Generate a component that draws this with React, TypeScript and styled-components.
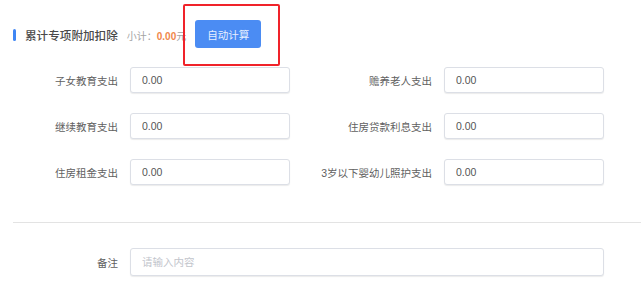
import styled, { createGlobalStyle } from 'styled-components';

type TField = {
  label: string;
  value: string;
};

const FIELDS: TField[] = [
  { label: '子女教育支出', value: '0.00' },
  { label: '赡养老人支出', value: '0.00' },
  { label: '继续教育支出', value: '0.00' },
  { label: '住房贷款利息支出', value: '0.00' },
  { label: '住房租金支出', value: '0.00' },
  { label: '3岁以下婴幼儿照护支出', value: '0.00' }
];

export default function App() {
  return (
    <Page>
      <GlobalStyle />
      <Header>
        <Marker />
        <Title>累计专项附加扣除</Title>
        <Subtotal>
          小计：<Amount>0.00</Amount>元
        </Subtotal>
        <Highlight>
          <CalcButton type="button">自动计算</CalcButton>
        </Highlight>
      </Header>

      <FieldGrid>
        {FIELDS.map((field) => (
          <Field key={field.label}>
            <Label>{field.label}</Label>
            <Input defaultValue={field.value} />
          </Field>
        ))}
      </FieldGrid>

      <Divider />

      <RemarkRow>
        <Label>备注</Label>
        <Input placeholder="请输入内容" $tall />
      </RemarkRow>
    </Page>
  );
}

const GlobalStyle = createGlobalStyle`
  * {
    box-sizing: border-box;
  }

  body {
    margin: 0;
    background: #fff;
    font-family: 'Liberation Sans', 'Noto Sans CJK SC', sans-serif;
  }
`;

const Page = styled.div`
  width: 641px;
  height: 283px;
  padding-top: 20px;
  overflow: hidden;
`;

const Header = styled.div`
  display: flex;
  align-items: center;
  height: 28px;
  padding-left: 13px;
`;

const Marker = styled.span`
  width: 3px;
  height: 12px;
  margin-top: 2px;
  border-radius: 2px;
  background-color: #3f86f4;
`;

const Title = styled.h2`
  margin: 2px 0 0 9px;
  font-size: 11.6px;
  font-weight: 500;
  color: #4a4a4a;
`;

const Subtotal = styled.span`
  margin: 2px 0 0 9px;
  font-size: 10px;
  color: #a3a3a3;
`;

const Amount = styled.span`
  font-weight: 700;
  color: #f0884a;
`;

const Highlight = styled.div`
  position: relative;
  margin-left: 9px;

  &::after {
    content: '';
    position: absolute;
    inset: -16px -19px -18px -12px;
    border: 2px solid #f0232a;
    border-radius: 2px;
    pointer-events: none;
  }
`;

const CalcButton = styled.button`
  display: block;
  width: 66px;
  height: 28px;
  padding: 0;
  border: none;
  border-radius: 3px;
  background-color: #4b8cf3;
  color: #e8f0ff;
  font-family: inherit;
  font-size: 10.5px;
`;

const FieldGrid = styled.div`
  display: grid;
  grid-template-columns: 290px 302px;
  column-gap: 12px;
  row-gap: 20px;
  margin-top: 19px;
`;

const Field = styled.div`
  display: flex;
  align-items: center;
  justify-content: flex-end;
  gap: 12px;
`;

const Label = styled.label`
  font-size: 10.5px;
  color: #5f5f5f;
  white-space: nowrap;
`;

const Input = styled.input<{ $tall?: boolean }>`
  width: 160px;
  height: ${({ $tall }) => ($tall ? '28px' : '26px')};
  padding: 0 11px;
  border: 1px solid #dcdfe6;
  border-radius: 3px;
  box-shadow: 0 1px 1px rgba(0, 0, 0, 0.08);
  font-family: inherit;
  font-size: 10.5px;
  color: #555;
  outline: none;

  &::placeholder {
    color: #c2c5cc;
  }
`;

const Divider = styled.hr`
  margin: 37px 0 0 13px;
  border: none;
  border-top: 1px solid #e3e3e3;
`;

const RemarkRow = styled.div`
  display: flex;
  align-items: center;
  gap: 12px;
  margin-top: 25px;
  padding-left: 97px;

  ${Input} {
    width: 474px;
  }
`;
